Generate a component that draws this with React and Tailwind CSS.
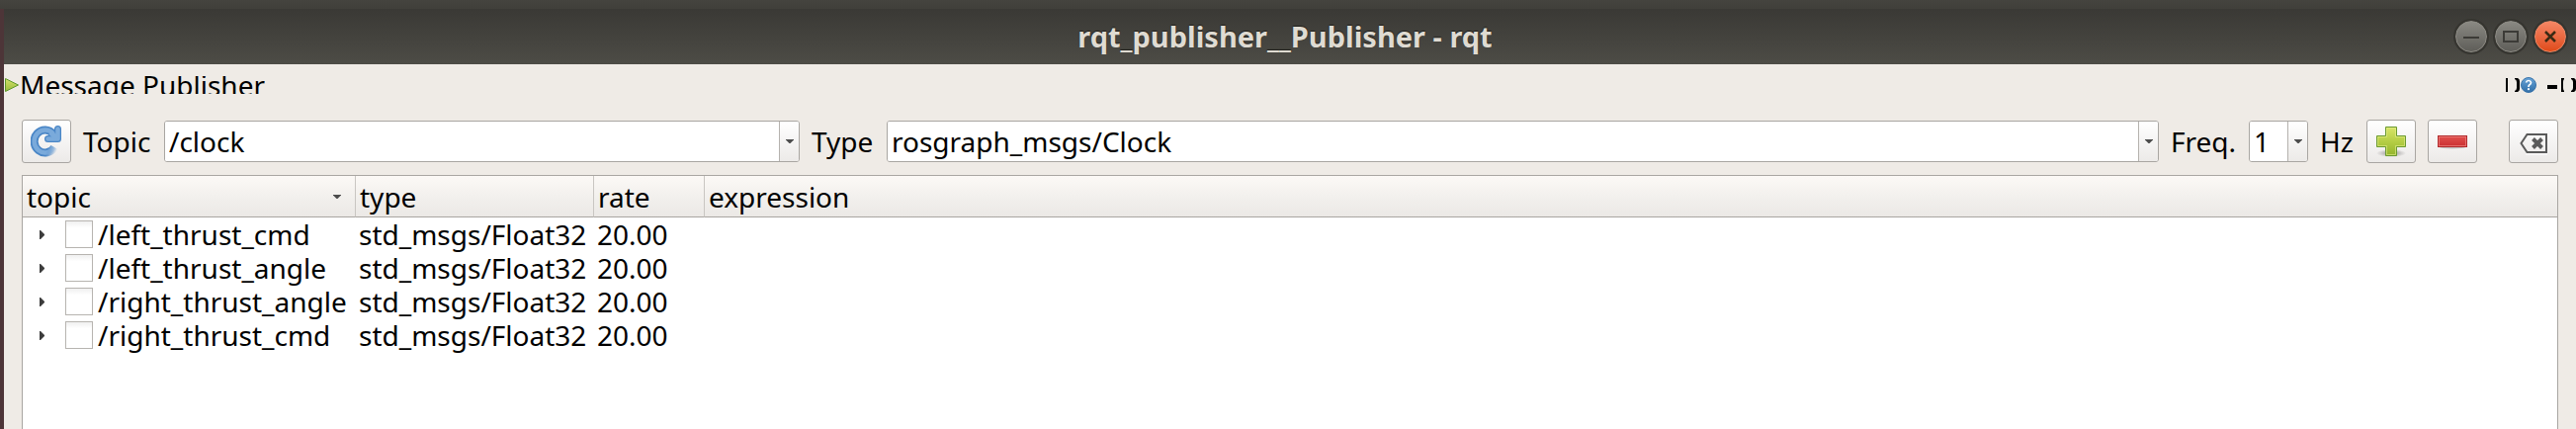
import React, { useState } from "react";

const rows = [
  { topic: "/left_thrust_cmd", type: "std_msgs/Float32", rate: "20.00" },
  { topic: "/left_thrust_angle", type: "std_msgs/Float32", rate: "20.00" },
  { topic: "/right_thrust_angle", type: "std_msgs/Float32", rate: "20.00" },
  { topic: "/right_thrust_cmd", type: "std_msgs/Float32", rate: "20.00" },
];

const toolButton =
  "flex h-11 w-[50px] shrink-0 items-center justify-center rounded-[3px] border border-[#a9a6a2] bg-linear-to-b from-white to-[#eceae8]";

const headerCell = "border-b border-b-[#a9a6a2] p-0 pl-1 font-normal";

function RefreshIcon() {
  return (
    <svg width="32" height="32" viewBox="0 0 32 32" fill="none" aria-hidden="true">
      <defs>
        <linearGradient id="fade" x1="18" y1="22" x2="27" y2="25" gradientUnits="userSpaceOnUse">
          <stop offset="0" stopColor="#4a86c6" />
          <stop offset="1" stopColor="#4a86c6" stopOpacity="0" />
        </linearGradient>
        <linearGradient id="fadeLight" x1="17" y1="22" x2="26" y2="25" gradientUnits="userSpaceOnUse">
          <stop offset="0" stopColor="#7aaadb" />
          <stop offset="1" stopColor="#7aaadb" stopOpacity="0" />
        </linearGradient>
      </defs>
      <path d="M23 8.500A11 11.500 0 1 0 24 22" stroke="url(#fade)" strokeWidth="8" />
      <path d="M27.500 3.500V13.500H17.500" stroke="#4a86c6" strokeWidth="7" strokeLinecap="round" strokeLinejoin="round" />
      <path d="M20 7L27 13" stroke="#4a86c6" strokeWidth="7" />
      <path d="M27.500 3.500V13.500H17.500" stroke="#7aaadb" strokeWidth="4.500" strokeLinecap="round" strokeLinejoin="round" />
      <path d="M20 7L27 13" stroke="#7aaadb" strokeWidth="5" />
      <path d="M23 8.500A11 11.500 0 1 0 24 22" stroke="url(#fadeLight)" strokeWidth="4.500" />
    </svg>
  );
}

function PlusIcon() {
  return (
    <svg width="32" height="34" viewBox="0 0 32 34" aria-hidden="true">
      <defs>
        <linearGradient id="plusFill" x1="0" y1="0" x2="0" y2="1">
          <stop offset="0" stopColor="#d9e56a" />
          <stop offset="0.5" stopColor="#b5ce45" />
          <stop offset="1" stopColor="#93b42c" />
        </linearGradient>
        <radialGradient id="plusShade">
          <stop offset="0" stopColor="#000" stopOpacity="0.4" />
          <stop offset="1" stopColor="#000" stopOpacity="0" />
        </radialGradient>
      </defs>
      <ellipse cx="16" cy="29" rx="15" ry="4" fill="url(#plusShade)" />
      <path d="M10.500 2.500H21.500V11.500H30.500V22.500H21.500V31.500H10.500V22.500H1.500V11.500H10.500Z" fill="url(#plusFill)" stroke="#6a992f" strokeLinejoin="round" />
      <path d="M11.500 3.500H20.500V12.500H29.500V21.500H20.500V30.500H11.500V21.500H2.500V12.500H11.500Z" fill="none" stroke="#e4ef8e" strokeOpacity="0.6" />
    </svg>
  );
}

function MinusIcon() {
  return (
    <svg width="32" height="16" viewBox="0 0 32 16" aria-hidden="true">
      <defs>
        <linearGradient id="minusFill" x1="0" y1="0" x2="0" y2="1">
          <stop offset="0" stopColor="#e2504d" />
          <stop offset="1" stopColor="#c92f31" />
        </linearGradient>
      </defs>
      <ellipse cx="16" cy="14" rx="13" ry="1.500" fill="#000" fillOpacity="0.2" />
      <rect x="1.500" y="2.500" width="29" height="11" fill="url(#minusFill)" stroke="#b02a2c" />
      <rect x="2.500" y="3.500" width="27" height="9" fill="none" stroke="#ef8583" strokeOpacity="0.7" />
    </svg>
  );
}

function ClearIcon() {
  return (
    <svg width="32" height="32" viewBox="0 0 32 32" fill="none" aria-hidden="true">
      <path d="M8 29H30" stroke="#fff" />
      <path d="M9.500 9H29V27H9.500L3.500 18Z" stroke="#5a5a5a" strokeWidth="2" />
      <path d="M15.500 13.500L24.500 22.500M24.500 13.500L15.500 22.500" stroke="#5a5a5a" strokeWidth="4" />
    </svg>
  );
}

function HelpIcon() {
  return (
    <svg width="16" height="16" viewBox="0 0 16 16" aria-hidden="true">
      <defs>
        <linearGradient id="helpFill" x1="0" y1="0" x2="0" y2="1">
          <stop offset="0" stopColor="#6aa5d8" />
          <stop offset="1" stopColor="#2f6ea8" />
        </linearGradient>
      </defs>
      <circle cx="8" cy="8" r="7.500" fill="url(#helpFill)" stroke="#3a74aa" />
      <path d="M5.500 5.500Q6 3.500 8 3.500T10.500 5.500Q10.500 7 8.800 7.900Q8 8.500 8 10" fill="none" stroke="#fff" strokeWidth="1.700" />
      <circle cx="8" cy="12.200" r="1.100" fill="#fff" />
    </svg>
  );
}

function DownArrow() {
  return (
    <svg width="8" height="4" viewBox="0 0 8 4" aria-hidden="true">
      <path d="M0 0H8V0.500L4.500 4H3.500L0 0.500Z" fill="#4c4c4c" />
    </svg>
  );
}

function Combo({ id, value, className }) {
  const [text, setText] = useState(value);
  return (
    <div className={`flex h-[42px] overflow-hidden rounded-[3px] border border-[#a9a6a2] bg-white ${className}`}>
      <input
        id={id}
        value={text}
        onChange={(e) => setText(e.target.value)}
        className="h-full min-w-0 flex-1 bg-white px-1 leading-10 outline-none"
      />
      <button
        type="button"
        aria-label="Show choices"
        className="flex w-5 shrink-0 items-center justify-center border-l border-[#b5b2ae] bg-linear-to-b from-white to-[#eceae8]"
      >
        <DownArrow />
      </button>
    </div>
  );
}

const windowButton =
  "flex size-8 items-center justify-center rounded-full border border-[#8f8d86] bg-linear-to-b from-[#8a8983] to-[#5f5e59] outline-2 outline-[#363530]";

export default function App() {
  return (
    <div className="flex min-h-screen bg-[#4d3538] font-['Noto_Sans','Open_Sans',sans-serif] text-[28px] leading-[34px] text-black">
      <div className="flex min-w-0 flex-1 flex-col">
        <div className="h-[9px] bg-linear-to-b from-[#45443f] to-[#403f3a]" />
        <div className="ml-1 flex flex-1 flex-col bg-[#efebe6]">
          <header className="grid h-14 grid-cols-[1fr_auto_1fr] items-center bg-linear-to-b from-[#3a3935] to-[#4d4c46] pr-2.5">
            <h1 className="col-start-2 text-[29px] font-bold text-[#dfdbd2] [text-shadow:0_-1px_1px_#1f1e1b]">
              rqt_publisher__Publisher - rqt
            </h1>
            <div className="flex justify-end gap-2">
              <button type="button" aria-label="Minimize" className={windowButton}>
                <svg width="16" height="16" viewBox="0 0 16 16" aria-hidden="true">
                  <path d="M0 9H16" stroke="#3c3b37" strokeWidth="2" />
                </svg>
              </button>
              <button type="button" aria-label="Maximize" className={windowButton}>
                <svg width="16" height="12" viewBox="0 0 16 12" aria-hidden="true">
                  <rect x="1" y="1" width="14" height="10" fill="none" stroke="#3c3b37" strokeWidth="2" />
                </svg>
              </button>
              <button
                type="button"
                aria-label="Close"
                className="flex size-8 items-center justify-center rounded-full border border-[#ef8a66] bg-linear-to-b from-[#f58664] to-[#df4a16] outline-2 outline-[#363530]"
              >
                <svg width="14" height="14" viewBox="0 0 14 14" aria-hidden="true">
                  <path d="M2 2L12 12M12 2L2 12" stroke="#3a2a14" strokeWidth="2.500" />
                </svg>
              </button>
            </div>
          </header>

          <div className="mt-3 flex h-[18px] items-center">
            <svg width="16" height="16" viewBox="0 0 16 16" aria-hidden="true">
              <defs>
                <linearGradient id="dockFill" x1="0" y1="0" x2="0" y2="1">
                  <stop offset="0" stopColor="#d3e26c" />
                  <stop offset="1" stopColor="#9abb3a" />
                </linearGradient>
              </defs>
              <path d="M1.500 1.500L14.500 8L1.500 14.500Z" fill="url(#dockFill)" stroke="#5f9a2c" strokeLinejoin="round" />
            </svg>
            <div className="flex h-[18px] items-center overflow-hidden">
              <h2 className="leading-9">Message Publisher</h2>
            </div>
            <div className="ml-auto flex h-4 items-center">
              <button type="button" aria-label="Reload" className="flex">
                <svg width="15" height="14" viewBox="0 0 15 14" aria-hidden="true">
                  <path d="M0 0H2V14H0ZM9 0H12Q14 1 14 3V11Q14 13 12 14H9V13Q11 12 11 10V4Q11 2 9 1Z" fill="#000" />
                </svg>
              </button>
              <button type="button" aria-label="Help" className="flex">
                <HelpIcon />
              </button>
              <button type="button" aria-label="Dock minimize" className="ml-[11px] flex">
                <svg width="10" height="14" viewBox="0 0 10 14" aria-hidden="true">
                  <path d="M0 7H10V11H0Z" fill="#000" />
                </svg>
              </button>
              <button type="button" aria-label="Dock float" className="ml-1 flex">
                <svg width="15" height="14" viewBox="0 0 15 14" aria-hidden="true">
                  <path d="M0 0H3V1Q2 2 2 4V10Q2 12 3 13V14H0ZM10 0H13Q15 1 15 3V11Q15 13 13 14H10V13Q12 12 12 10V4Q12 2 10 1Z" fill="#000" />
                </svg>
              </button>
            </div>
          </div>

          <div className="mt-[26px] flex h-11 items-center gap-3 px-[18px]">
            <button type="button" aria-label="Refresh topics" className={toolButton}>
              <RefreshIcon />
            </button>
            <label htmlFor="topic" className="w-[70px] shrink-0">Topic</label>
            <Combo id="topic" value="/clock" className="w-[643px] shrink" />
            <label htmlFor="type" className="w-16 shrink-0">Type</label>
            <Combo id="type" value="rosgraph_msgs/Clock" className="flex-1" />
            <label htmlFor="freq" className="w-[67px] shrink-0">Freq.</label>
            <Combo id="freq" value="1" className="w-[60px] shrink-0" />
            <span className="w-[35px] shrink-0">Hz</span>
            <button type="button" aria-label="Add publisher" className={toolButton}>
              <PlusIcon />
            </button>
            <button type="button" aria-label="Remove publisher" className={toolButton}>
              <MinusIcon />
            </button>
            <button type="button" aria-label="Clear publishers" className={`${toolButton} ml-5`}>
              <ClearIcon />
            </button>
          </div>

          <div className="mx-[18px] mt-3 flex-1 border-x border-t border-[#a9a6a2] bg-white">
            <table className="w-full table-fixed border-separate border-spacing-0 text-left">
              <colgroup>
                <col className="w-[337px]" />
                <col className="w-[241px]" />
                <col className="w-[112px]" />
                <col />
              </colgroup>
              <thead>
                <tr className="h-[42px] bg-linear-to-b from-[#fcf9f6] via-[#f2f0ed] to-[#ebe8e5]">
                  <th className={`${headerCell} border-r border-r-[#c9c6c2]`}>
                    <div className="flex items-center justify-between pr-[14px]">
                      topic
                      <DownArrow />
                    </div>
                  </th>
                  <th className={`${headerCell} border-r border-r-[#c9c6c2]`}>type</th>
                  <th className={`${headerCell} border-r border-r-[#c9c6c2]`}>rate</th>
                  <th className={headerCell}>expression</th>
                </tr>
              </thead>
              <tbody className="whitespace-nowrap">
                {rows.map((row, i) => (
                  <tr key={row.topic} className="h-[34px]">
                    <td className="p-0">
                      <div className="flex items-center">
                        <button type="button" aria-label={`Expand ${row.topic}`} className="ml-[17px] flex w-[26px]">
                          <svg width="5" height="9" viewBox="0 0 5 9" aria-hidden="true">
                            <path d="M0 0H1L5 4V5L1 9H0Z" fill="#3c3c3c" />
                          </svg>
                        </button>
                        <input
                          id={`row-${i}`}
                          type="checkbox"
                          className="size-7 shrink-0 appearance-none border border-[#b7b4b0] bg-linear-to-b from-[#f0f0f0] to-white to-25%"
                        />
                        <label htmlFor={`row-${i}`} className="ml-[5px]">{row.topic}</label>
                      </div>
                    </td>
                    <td className="p-0 pl-[3px]">{row.type}</td>
                    <td className="p-0 pl-[3px]">{row.rate}</td>
                    <td className="p-0" />
                  </tr>
                ))}
              </tbody>
            </table>
          </div>
        </div>
      </div>
    </div>
  );
}
